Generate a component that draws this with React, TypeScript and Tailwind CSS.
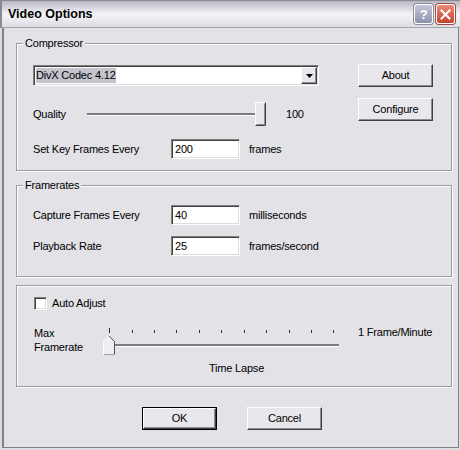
import React from 'react';

const sunken =
  'border border-t-[#808080] border-l-[#808080] border-b-white border-r-white shadow-[inset_1px_1px_0_#404040,inset_-1px_-1px_0_#dcdce0]';
const raised =
  'border border-t-white border-l-white border-b-[#404040] border-r-[#404040] shadow-[inset_-1px_-1px_0_#8c8c94] bg-[#e8e8ec]';
const group =
  'border border-[#9c9ca4] shadow-[1px_1px_0_#ffffff,inset_1px_1px_0_#ffffff]';

function Button({ label, isDefault }: { label: string; isDefault?: boolean }) {
  if (isDefault) {
    return (
      <div className="w-[75px] h-[23px] border border-black flex">
        <div className={`flex-1 flex items-center justify-center ${raised}`}>{label}</div>
      </div>
    );
  }
  return (
    <div className={`w-[75px] h-[23px] flex items-center justify-center ${raised}`}>{label}</div>
  );
}

function TextBox({ value }: { value: string }) {
  return (
    <div className={`w-[69px] h-[20px] bg-white flex items-center pl-[3px] ${sunken}`}>{value}</div>
  );
}

function FieldRow({ label, value, unit, className }: { label: string; value: string; unit: string; className?: string }) {
  return (
    <div className={`flex items-center h-[20px] ${className ?? ''}`}>
      <span className="w-[138px]">{label}</span>
      <TextBox value={value} />
      <span className="ml-[9px]">{unit}</span>
    </div>
  );
}

function QualitySlider() {
  return (
    <svg width="179" height="24" viewBox="0 0 179 24">
      <rect x="0" y="11" width="170" height="2" fill="#7c7c84" />
      <rect x="0" y="13" width="170" height="1" fill="#ffffff" />
      <rect x="168" y="0" width="11" height="24" fill="#e8e8ec" />
      <path d="M168.5 23.5 V0.5 H178.5" stroke="#ffffff" fill="none" />
      <path d="M168.5 23.5 H178.5 V0.5" stroke="#404040" fill="none" />
      <path d="M169.5 22.5 H177.5 V1.5" stroke="#8c8c94" fill="none" />
    </svg>
  );
}

function TimeLapseSlider() {
  const ticks = Array.from({ length: 11 }, (_, i) => 6.3 + i * 22.4);
  return (
    <svg width="237" height="30" viewBox="0 0 237 30">
      {ticks.map((x, i) => (
        <rect key={i} x={Math.round(x)} y={i === 0 ? 2 : 4} width="1" height={i === 0 ? 5 : 3} fill="#303030" />
      ))}
      <rect x="10" y="18" width="226" height="2" fill="#7c7c84" />
      <rect x="10" y="20" width="226" height="1" fill="#ffffff" />
      <polygon points="0.5,15.5 6,10 11.5,15.5 11.5,28.5 0.5,28.5" fill="#eeeef0" />
      <polyline points="0.5,28.5 0.5,15.5 6,10" stroke="#ffffff" fill="none" />
      <polyline points="6,10 11.5,15.5 11.5,28.5" stroke="#505058" fill="none" />
      <polyline points="1,28.5 11,28.5" stroke="#a0a0a8" fill="none" />
    </svg>
  );
}

function TitleBar() {
  return (
    <div className="h-[28px] flex items-center bg-linear-to-b from-[#b8b8c2] via-[#f4f4f7] to-[#dcdce3] border-t border-l-2 border-[#8a8a94] border-b border-b-[#a4a4ae] pl-[6px] pr-[5px]">
      <span className="font-bold text-[12.5px] tracking-normal">Video Options</span>
      <div className="ml-auto flex gap-[3px]">
        <div className="w-[19px] h-[20px] rounded-[3px] border border-white bg-linear-to-b from-[#c4c8d8] to-[#8e93ab] flex items-center justify-center text-white font-bold text-[13px] leading-none shadow-[0_0_0_1px_#8a8e9e]">
          ?
        </div>
        <div className="w-[19px] h-[20px] rounded-[3px] border border-white bg-linear-to-b from-[#ec8a78] to-[#c4412c] flex items-center justify-center shadow-[0_0_0_1px_#9a4a40]">
          <svg width="11" height="11" viewBox="0 0 11 11">
            <path d="M1.5 1.5 L9.5 9.5 M9.5 1.5 L1.5 9.5" stroke="#ffffff" strokeWidth="2" strokeLinecap="square" />
          </svg>
        </div>
      </div>
    </div>
  );
}

export default function App() {
  return (
    <div className="w-[460px] h-[450px] flex flex-col bg-[#dcdce2] font-['Liberation_Sans',Arial,sans-serif] text-[11px] tracking-[-0.2px] text-black select-none">
      <TitleBar />
      <div className="flex-1 flex pl-[2px] pr-[1px] pb-[2px]">
        <div className="flex-1 flex flex-col bg-[#e2e2e7] border-l-2 border-r border-b border-[#80808c] pl-[12px] pr-[6px] pt-[8px]">
          {/* Compressor */}
          <fieldset className={`${group} pt-[15px] pb-[11px]`}>
            <legend className="ml-[6px] px-[2px] h-[14px] leading-[14px] bg-[#e2e2e7]">Compressor</legend>
            <div className="flex pl-[16px]">
              <div className="w-[286px] flex flex-col">
                <div className={`h-[21px] w-[286px] bg-white flex items-center p-[1px] ${sunken}`}>
                  <span className="ml-[1px] bg-[#c4c4cc] leading-[15px]">DivX Codec 4.12</span>
                  <div className={`ml-auto w-[16px] h-[17px] flex items-center justify-center ${raised}`}>
                    <svg width="7" height="4" viewBox="0 0 7 4">
                      <polygon points="0,0 7,0 3.5,4" fill="#000" />
                    </svg>
                  </div>
                </div>
                <div className="mt-[16px] h-[24px] flex items-center">
                  <span className="w-[54px]">Quality</span>
                  <QualitySlider />
                  <span className="ml-[20px]">100</span>
                </div>
                <FieldRow className="mt-[13px]" label="Set Key Frames Every" value="200" unit="frames" />
              </div>
              <div className="ml-[39px] mt-[-1px] flex flex-col gap-[11px]">
                <Button label="About" />
                <Button label="Configure" />
              </div>
            </div>
          </fieldset>

          {/* Framerates */}
          <fieldset className={`${group} mt-[7px] pt-[13px] pb-[20px]`}>
            <legend className="ml-[6px] px-[2px] h-[14px] leading-[14px] bg-[#e2e2e7]">Framerates</legend>
            <div className="pl-[16px]">
              <FieldRow label="Capture Frames Every" value="40" unit="milliseconds" />
              <FieldRow className="mt-[11px]" label="Playback Rate" value="25" unit="frames/second" />
            </div>
          </fieldset>

          {/* Auto adjust */}
          <div className={`${group} mt-[8px] pt-[11px] pb-[11px] pl-[17px]`}>
            <div className="h-[13px] flex items-center">
              <div className={`w-[13px] h-[13px] bg-white ${sunken}`} />
              <span className="ml-[5px]">Auto Adjust</span>
            </div>
            <div className="mt-[16px] h-[30px] flex items-start">
              <div className="w-[69px] leading-[14px]">
                <div>Max</div>
                <div>Framerate</div>
              </div>
              <TimeLapseSlider />
              <span className="ml-[18px] mt-[-1px] leading-[14px]">1 Frame/Minute</span>
            </div>
            <div className="mt-[5px] ml-[175px] leading-[14px]">Time Lapse</div>
          </div>

          {/* Dialog buttons */}
          <div className="mt-[20px] flex pl-[126px] gap-[30px]">
            <Button label="OK" isDefault />
            <Button label="Cancel" />
          </div>
        </div>
      </div>
    </div>
  );
}
